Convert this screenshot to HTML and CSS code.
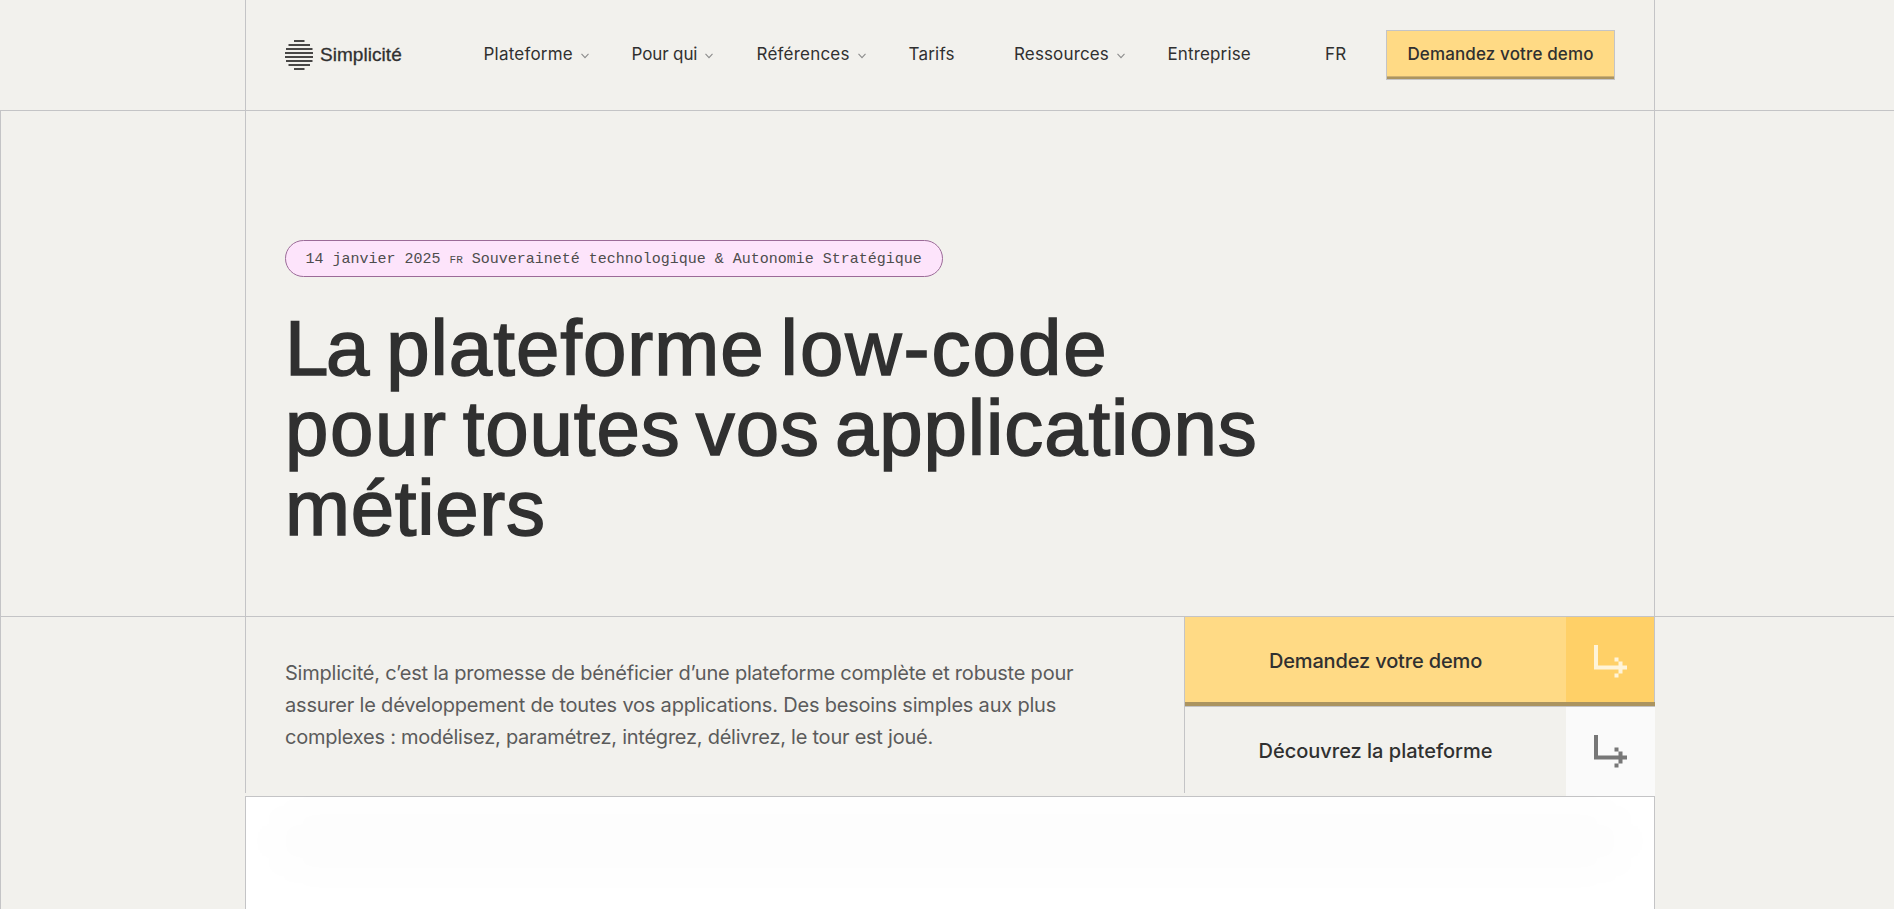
FILE: index.html
```
<!DOCTYPE html>
<html lang="fr">
<head>
<meta charset="utf-8">
<title>Simplicité</title>
<link rel="stylesheet" href="styles.css">
</head>
<body>
<header class="header">
  <div class="header-inner">
    <a class="logo">
      <svg class="logo-mark" width="28" height="30" viewBox="0 0 28 30" fill="#484746"><path d="M9 0h10.500v2H9zM3.500 4h21.500v2H3.500zM1 8h26.500v2H1zM0 12h28v2H0zM0 16h28v2H0zM1 20h26.500v2H1zM3.500 24h21.500v2H3.500zM9 28h10.500v2H9z"/></svg>
      <span class="logo-text">Simplicité</span>
    </a>
    <nav class="nav">
      <a class="item plateforme">Plateforme<svg class="chev" width="8" height="6" viewBox="0 0 8 6"><path d="M.5 .8L4 4.600L7.500 .8"/></svg></a>
      <a class="item pourqui">Pour qui<svg class="chev" width="8" height="6" viewBox="0 0 8 6"><path d="M.5 .8L4 4.600L7.500 .8"/></svg></a>
      <a class="item references">Références<svg class="chev" width="8" height="6" viewBox="0 0 8 6"><path d="M.5 .8L4 4.600L7.500 .8"/></svg></a>
      <a class="item tarifs">Tarifs</a>
      <a class="item ressources">Ressources<svg class="chev" width="8" height="6" viewBox="0 0 8 6"><path d="M.5 .8L4 4.600L7.500 .8"/></svg></a>
      <a class="item entreprise">Entreprise</a>
      <a class="item lang">FR</a>
    </nav>
    <a class="demo">Demandez votre demo</a>
  </div>
</header>
<main class="main">
  <section class="row hero">
    <div class="hero-inner">
      <a class="pill">14 janvier 2025 <small>FR</small> Souveraineté technologique &amp; Autonomie Stratégique</a>
      <h1 class="title"><span class="line l1"><span class="kern">L</span>a plateforme <span class="wide">low-code</span></span><span class="line l2"><span class="loose">pour</span> toutes vos applications</span><span class="line l3">métiers</span></h1>
    </div>
  </section>
  <section class="row intro">
    <div class="intro-inner">
      <p class="text"><span class="line p1">Simplicité, c’est la promesse de bénéficier d’une plateforme complète et robuste pour</span><span class="line p2">assurer le développement de toutes vos applications. Des besoins simples aux plus</span><span class="line p3">complexes : modélisez, paramétrez, intégrez, délivrez, le tour est joué.</span></p>
      <div class="ctas">
        <a class="cta primary"><span class="label c1">Demandez votre demo</span><span class="arrow"><svg width="33" height="33" viewBox="0 0 33 33"><path d="M0 0h4v20.500h20.500v-4h4v4H33v4h-4.500v4h-4v-4H0zM20.500 12.500h4v4h-4zM20.500 28.500h4v4h-4z"/></svg></span></a>
        <a class="cta secondary"><span class="label c2">Découvrez la plateforme</span><span class="arrow"><svg width="33" height="33" viewBox="0 0 33 33"><path d="M0 0h4v20.500h20.500v-4h4v4H33v4h-4.500v4h-4v-4H0zM20.500 12.500h4v4h-4zM20.500 28.500h4v4h-4z"/></svg></span></a>
      </div>
    </div>
  </section>
  <section class="media-row"><div class="media"></div></section>
</main>
</body>
</html>
```
FILE: styles.css
```
* { box-sizing: border-box; }
body {
  margin: 0;
  height: 909px;
  overflow: hidden;
  background: #f2f1ed;
  color: #303030;
  font-family: Inter, "Liberation Sans", sans-serif;
  display: flex;
  flex-direction: column;
}
.header {
  height: 111px;
  flex: none;
  border-bottom: 1px solid #c4c4c6;
  padding-left: 245px;
}
.header-inner {
  width: 1410px;
  height: 110px;
  border: solid #c4c4c6;
  border-width: 0 1px;
  padding: 30px 39px 0;
  display: flex;
  align-items: flex-start;
}
.logo { flex: none; display: flex; width: 198.5px; padding-top: 10px; }
.logo-mark { flex: none; }
.logo-text {
  font: 19px/30px "Liberation Sans", Arial, sans-serif;
  letter-spacing: .05px;
  margin-left: 7px;
  -webkit-text-stroke: .3px #303030;
}
.nav { flex: none; display: flex; width: 902.5px; height: 50px; line-height: 48px; font-size: 17px; letter-spacing: .22px; }
.item { flex: none; white-space: nowrap; }
.plateforme { width: 148px; }
.pourqui { width: 125px; letter-spacing: -.12px; }
.references { width: 152px; }
.tarifs { width: 105.5px; }
.ressources { width: 153.5px; letter-spacing: .14px; }
.entreprise { width: 157.5px; letter-spacing: .14px; }
.chev { margin-left: 8px; margin-bottom: 1px; fill: none; stroke: #8d8d8d; stroke-width: 1.1; }
.demo {
  flex: none;
  width: 229px;
  height: 50px;
  border: 1px solid #c4c4c6;
  background: #ffda85;
  box-shadow: inset 0 -2px #ab9460, inset 0 -3px #cdb071;
  text-align: center;
  font-size: 17px;
  font-weight: 500;
  letter-spacing: .13px;
  line-height: 46px;
}
.main { flex: 1; border-left: 1px solid #c4c4c6; }
.row { border-bottom: 1px solid #c4c4c6; padding-left: 244px; }
.hero { height: 506px; }
.hero-inner {
  width: 1410px;
  height: 505px;
  border: solid #c4c4c6;
  border-width: 0 1px;
  padding: 129px 39px 0;
}
.pill {
  display: block;
  width: 658px;
  height: 37px;
  border: 1px solid #9b6b98;
  border-radius: 19px;
  background: #fde4fb;
  color: #4d4d4d;
  padding-left: 19.5px;
  font: 15px/37px "Liberation Mono", monospace;
  white-space: nowrap;
}
.pill small { font-size: 11px; }
.title {
  margin: 31px 0 0;
  font: 78px/80px "Liberation Sans", Arial, sans-serif;
  -webkit-text-stroke: 1.5px #303030;
}
.line { display: block; white-space: nowrap; }
.l1 { letter-spacing: 1px; word-spacing: -6.8px; }
.kern { letter-spacing: -2.5px; }
.wide { letter-spacing: 2px; }
.l2 { letter-spacing: .9px; word-spacing: -7.4px; }
.loose { letter-spacing: 1.6px; }
.l3 { letter-spacing: .7px; }
.intro { height: 180px; border-bottom: 0; }
.intro-inner { display: flex; width: 1410px; height: 180px; }
.text {
  flex: none;
  width: 939px;
  height: 176px;
  margin: 0;
  padding: 40px 0 0 39px;
  border-left: 1px solid #c4c4c6;
  color: #5b5b5b;
  font-size: 20px;
  line-height: 32px;
}
.p1 { letter-spacing: -.215px; }
.p2 { letter-spacing: -.2px; }
.p3 { letter-spacing: -.24px; }
.ctas { position: relative; width: 471px; }
.ctas::before {
  content: "";
  position: absolute;
  left: 0;
  top: 0;
  width: 1px;
  height: 176px;
  background: #c4c4c6;
}
.cta { display: flex; margin-left: 1px; height: 90px; font-size: 20px; font-weight: 500; }
.label { flex: 1; display: flex; align-items: center; justify-content: center; }
.c1 { letter-spacing: -.15px; }
.arrow { width: 89px; display: flex; align-items: center; justify-content: center; }
.primary { background: #ffda85; border-bottom: 1px solid #c4c4c6; box-shadow: inset 0 -4px #ab9460; }
.primary .label { padding-bottom: 1px; }
.primary .arrow { height: 85px; background: #ffd067; border-right: 1px solid #c4c4c6; fill: #fff4d9; padding-top: 4px; }
.secondary .label { padding-bottom: 2px; }
.secondary .arrow { background: #fafafa; fill: #777; height: 89px; }
.media-row { padding-left: 244px; margin-top: -1px; }
.media {
  position: relative;
  width: 1410px;
  height: 113px;
  border: solid #c4c4c6;
  border-width: 1px 1px 0;
  background: #fff;
}
.media::after {
  content: "";
  position: absolute;
  left: 30px;
  right: 30px;
  top: 24px;
  height: 40px;
  border-radius: 20px;
  background: rgba(0, 0, 0, .015);
  filter: blur(24px);
}
```
